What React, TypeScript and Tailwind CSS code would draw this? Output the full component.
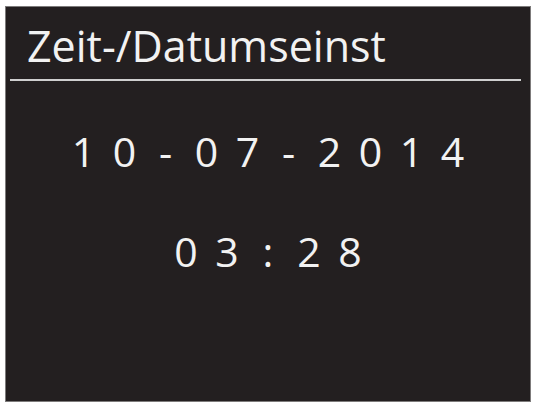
const dateChars = ["1", "0", "-", "0", "7", "-", "2", "0", "1", "4"];
const timeChars = ["0", "3", ":", "2", "8"];

const SpacedRow = ({ chars, className }: { chars: string[]; className?: string }) => {
  return (
    <div className={`flex justify-center ${className ?? ""}`}>
      {chars.map((c, i) => (
        <span key={i} className="w-[41px] text-center">
          {c}
        </span>
      ))}
    </div>
  );
};

const App = () => {
  return (
    <div className="w-[534px] h-[403px] bg-white pl-[5px] pt-[6px] font-['Open_Sans',sans-serif]">
      <div className="w-[526px] h-[396px] bg-[#231f20] border border-[#7d7b7b] flex flex-col text-[#f2f2f2]">
        <div className="pl-[21px] pt-[17px] text-[43px] leading-none">Zeit-/Datumseinst</div>
        <div className="mt-[12px] ml-[4px] w-[511px] h-[2px] bg-[#cfcfcf]" />
        <SpacedRow chars={dateChars} className="mt-[50px] text-[41px] leading-none" />
        <SpacedRow chars={timeChars} className="mt-[59px] text-[41px] leading-none" />
      </div>
    </div>
  );
};

export default App;
